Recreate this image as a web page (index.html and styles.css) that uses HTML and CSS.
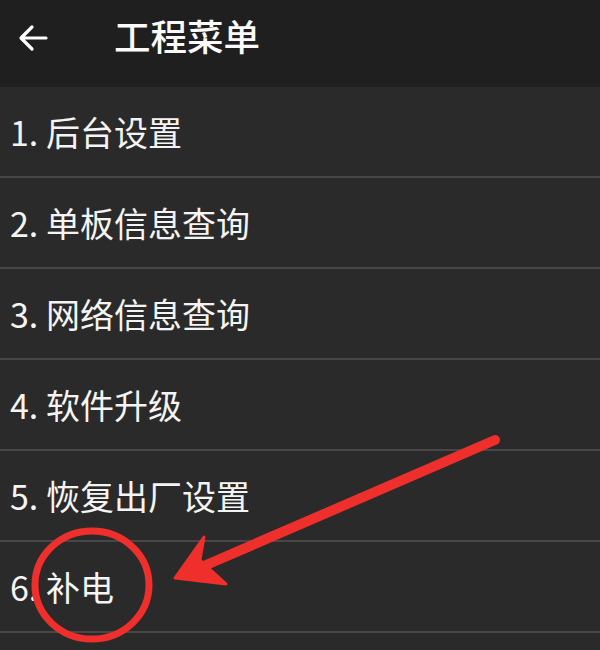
FILE: index.html
```html
<!DOCTYPE html>
<html lang="zh-CN">
<head>
<meta charset="utf-8">
<title>工程菜单</title>
<link rel="stylesheet" href="styles.css">
</head>
<body>
<div class="screen">
  <header class="appbar">
    <svg class="back" viewBox="0 0 32 32" width="32" height="32" aria-hidden="true">
      <path d="M29 16H5M15 5L4 16l11 11" fill="none" stroke="#fff" stroke-width="3.2" stroke-linecap="round" stroke-linejoin="round"/>
    </svg>
    <h1 class="title">工程菜单</h1>
  </header>
  <ul class="menu">
    <li class="item">1. 后台设置</li>
    <li class="item">2. 单板信息查询</li>
    <li class="item">3. 网络信息查询</li>
    <li class="item">4. 软件升级</li>
    <li class="item">5. 恢复出厂设置</li>
    <li class="item">6. 补电</li>
    <li class="item"></li>
  </ul>
  <svg class="annot" viewBox="0 0 600 650" width="600" height="650" aria-hidden="true">
    <ellipse cx="92" cy="585" rx="57" ry="54" fill="none" stroke="#ee2f2c" stroke-width="7"/>
    <line x1="495" y1="440" x2="190" y2="572" stroke="#ee2f2c" stroke-width="10" stroke-linecap="round"/>
    <path d="M175 578 L204 537 L200 560 L226 584 Z" fill="#ee2f2c" stroke="#ee2f2c" stroke-width="3" stroke-linejoin="round"/>
  </svg>
</div>
</body>
</html>
```
FILE: styles.css
```css
* { box-sizing: border-box; }
html, body {
  margin: 0;
  padding: 0;
  background: #2a2a2a;
}
.screen {
  position: relative;
  width: 600px;
  height: 650px;
  overflow: hidden;
  background: #2a2a2a;
  font-family: "Noto Sans CJK SC", "Noto Sans", sans-serif;
  color: #f4f4f4;
}
.appbar {
  height: 87px;
  background: #1f1f1f;
  display: flex;
  align-items: center;
  padding-left: 17px;
}
.back {
  display: block;
  margin-top: -12px;
}
.title {
  margin: -14px 0 0 65px;
  font-size: 36.5px;
  font-weight: 500;
  line-height: 1;
  color: #fafafa;
}
.menu {
  list-style: none;
  margin: 0;
  padding: 0;
}
.item {
  height: 91px;
  display: flex;
  align-items: center;
  padding-left: 10px;
  font-size: 34px;
  line-height: 1;
  border-bottom: 2px solid #474747;
  padding-bottom: 0;
}
.annot {
  position: absolute;
  left: 0;
  top: 0;
  pointer-events: none;
}
```
